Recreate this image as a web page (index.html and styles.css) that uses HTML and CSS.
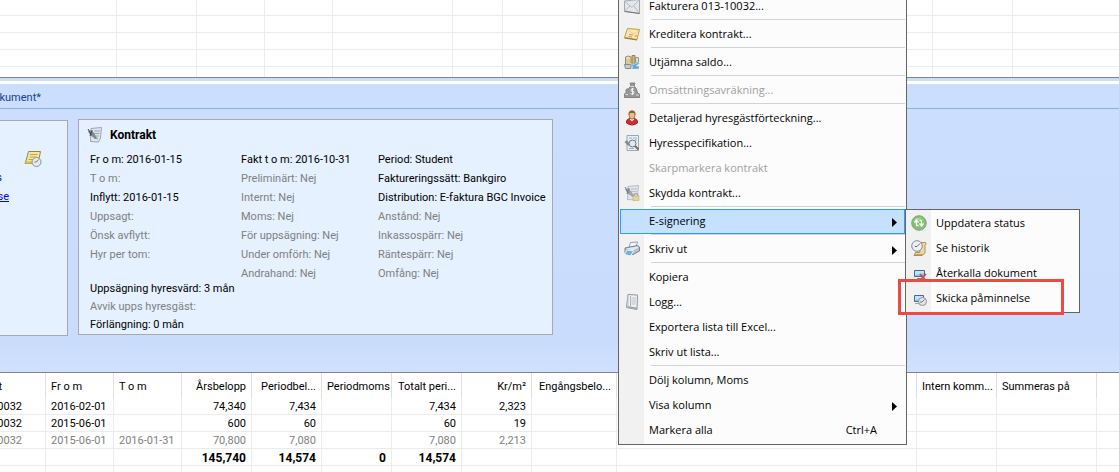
FILE: index.html
```html
<!DOCTYPE html>
<html lang="sv">
<head>
<meta charset="utf-8">
<title>Kontrakt</title>
<link rel="stylesheet" href="styles.css">
</head>
<body>
<main class="app">
  <section class="upper">
    <table class="grid grid-upper">
      <colgroup><col class="w117"><col class="w80"><col class="w68"><col class="w68"><col class="w120"><col class="w50"><col class="w80"><col class="w350"><col class="w80"><col></colgroup>
      <tbody>
        <tr class="cut"><td></td><td></td><td></td><td></td><td></td><td></td><td></td><td></td><td></td><td></td></tr>
        <tr><td></td><td></td><td></td><td></td><td></td><td></td><td></td><td></td><td></td><td></td></tr>
        <tr><td></td><td></td><td></td><td></td><td></td><td></td><td></td><td></td><td></td><td></td></tr>
        <tr><td></td><td></td><td></td><td></td><td></td><td></td><td></td><td></td><td></td><td></td></tr>
        <tr class="tail"><td></td><td></td><td></td><td></td><td></td><td></td><td></td><td></td><td></td><td></td></tr>
      </tbody>
    </table>
  </section>
  <div class="splitter"></div>
  <nav class="tabs"><a class="tab" href="#dokument">okument*</a></nav>
  <section class="details">
    <article class="card card-side">
      <svg class="note" width="18" height="18" viewBox="0 0 18 18"><path d="M4.500 1.500H16.500L14 13.500H1L2.500 9Z" fill="#f6e79a" stroke="#8f8658"/><path d="M6 4.500H13.500M5.500 7H12.500M4.500 9.500H10" stroke="#b9a755"/><path d="M1 13.500L2 11H9V13.500Z" fill="#e3c64e"/><circle cx="12.500" cy="12" r="4.500" fill="#e8ebee" stroke="#8b9096"/><path d="M12.500 12L14.500 9.500M12.500 12H10.500" stroke="#777" fill="none"/></svg>
      <a class="side-link side-link-first" href="#s">s</a>
      <a class="side-link" href="#se">se</a>
    </article>
    <article class="card card-contract">
      <h2 class="card-title">
        <svg width="16" height="16" viewBox="0 0 16 16"><path d="M4 1.500L14.500 .5L13.500 11L11.500 15L3.500 14.500Z" fill="#dfe7ee" stroke="#9aa5af"/><path d="M7 4H13M7 6.500H12.500M8 9H12M7 11.500H11" stroke="#91a3b5"/><path d="M1 4L5 3L10 11L8.500 12L3 8Z" fill="#85898d"/><path d="M1 2L4.500 8M5 3.500L3 9" stroke="#44484c"/></svg>
        Kontrakt
      </h2>
      <div class="facts">
        <div class="fact-col">
          <p>Fr o m: 2016-01-15</p>
          <p class="dim">T o m:</p>
          <p>Inflytt: 2016-01-15</p>
          <p class="dim">Uppsagt:</p>
          <p class="dim">Önsk avflytt:</p>
          <p class="dim">Hyr per tom:</p>
          <div class="terms">
            <p>Uppsägning hyresvärd: 3 mån</p>
            <p class="dim">Avvik upps hyresgäst:</p>
            <p>Förlängning: 0 mån</p>
          </div>
        </div>
        <div class="fact-col">
          <p>Fakt t o m: 2016-10-31</p>
          <p class="dim">Preliminärt: Nej</p>
          <p class="dim">Internt: Nej</p>
          <p class="dim">Moms: Nej</p>
          <p class="dim">För uppsägning: Nej</p>
          <p class="dim">Under omförh: Nej</p>
          <p class="dim">Andrahand: Nej</p>
        </div>
        <div class="fact-col">
          <p>Period: Student</p>
          <p>Faktureringssätt: Bankgiro</p>
          <p>Distribution: E-faktura BGC Invoice</p>
          <p class="dim">Anstånd: Nej</p>
          <p class="dim">Inkassospärr: Nej</p>
          <p class="dim">Räntespärr: Nej</p>
          <p class="dim">Omfång: Nej</p>
        </div>
      </div>
    </article>
  </section>
  <section class="lower">
    <table class="grid grid-lower">
      <colgroup><col class="w46"><col class="w68"><col class="w68"><col class="w70"><col class="w70"><col class="w70"><col class="w70"><col class="w70"><col class="w85"><col class="w300"><col class="w80"><col class="w100"><col></colgroup>
      <thead>
        <tr><th class="ref ref-head"><span>t</span></th><th>Fr o m</th><th>T o m</th><th class="num">Årsbelopp</th><th class="num">Periodbel...</th><th class="num">Periodmoms</th><th class="num">Totalt peri...</th><th class="num">Kr/m²</th><th class="num">Engångsbelo...</th><th></th><th>Intern komm...</th><th>Summeras på</th><th></th></tr>
      </thead>
      <tbody>
        <tr><td class="ref"><span>0032</span></td><td>2016-02-01</td><td></td><td class="num">74,340</td><td class="num">7,434</td><td></td><td class="num">7,434</td><td class="num">2,323</td><td></td><td></td><td></td><td></td><td></td></tr>
        <tr><td class="ref"><span>0032</span></td><td>2015-06-01</td><td></td><td class="num">600</td><td class="num">60</td><td></td><td class="num">60</td><td class="num">19</td><td></td><td></td><td></td><td></td><td></td></tr>
        <tr class="dim"><td class="ref"><span>0032</span></td><td>2015-06-01</td><td>2016-01-31</td><td class="num">70,800</td><td class="num">7,080</td><td></td><td class="num">7,080</td><td class="num">2,213</td><td></td><td></td><td></td><td></td><td></td></tr>
        <tr class="sum"><td></td><td></td><td></td><td class="num">145,740</td><td class="num">14,574</td><td class="num">0</td><td class="num">14,574</td><td></td><td></td><td></td><td></td><td></td><td></td></tr>
        <tr><td></td><td></td><td></td><td></td><td></td><td></td><td></td><td></td><td></td><td></td><td></td><td></td><td></td></tr>
      </tbody>
    </table>
  </section>
</main>

<ul class="menu menu-main">
  <li><button class="item"><svg class="ico" viewBox="0 0 16 16"><path d="M.5 3L15.500 1.500V15.500L.5 13Z" fill="#e3e6ea" stroke="#a4a8ad"/><path d="M.5 3L8 9.500L15.500 1.500M.5 13L6 8M15.500 15.500L10 8" fill="none" stroke="#b4b9be"/><path d="M.5 13.500L15.500 15.500" stroke="#777"/></svg>Fakturera 013-10032...</button></li>
  <li class="sep"></li>
  <li><button class="item"><svg class="ico" viewBox="0 0 16 16"><path d="M3.500 2.500L15.500 3.500L13 13.500L.5 11.500Z" fill="#f8e7ae" stroke="#c39a4c"/><path d="M.5 12L13 14" stroke="#9b7430"/><path d="M5 5L10 8L14 5" fill="none" stroke="#e9cf8c"/><path d="M5 8.500L9 9M4.500 10.500L8 11" stroke="#d88b70"/><path d="M11 9H13V11H10.500Z" fill="#e9b94e"/></svg>Kreditera kontrakt...</button></li>
  <li class="sep"></li>
  <li><button class="item"><svg class="ico" viewBox="0 0 16 16"><path d="M1.500 3Q4 1 7 3V12H1.500Z" fill="#ece0b0" stroke="#8f8a70"/><path d="M8 1.500H11V12H8Z" fill="#d2ba6a" stroke="#938452"/><path d="M11.500 3.500H14.500V9H11.500Z" fill="#d8dde0" stroke="#8e969c"/><path d="M3 5V11M5 5V11" stroke="#c5b36c"/><path d="M.5 10.500H7V14.500H1.500Z" fill="#c7ccd0" stroke="#858b90"/><path d="M6 9L9 11L14 8.500L15.500 9.500L12 12H15V15H7L9 13Z" fill="#5fa5d9" stroke="#d9edf8" stroke-width=".5"/></svg>Utjämna saldo...</button></li>
  <li class="sep"></li>
  <li><button class="item" disabled><svg class="ico" viewBox="0 0 16 16"><path d="M6 1H11L10 4Q13 6 13.500 11L15.500 12V15.500H.5V12L2 10.500V7.500L4.500 6.500L7 4Z" fill="#969696" stroke="#858585"/><path d="M6.500 4.500H10M1.500 12.500H4M12 13H15" stroke="#ddd"/><path d="M10 7Q7 6 7 8T9 9.500T9.500 12Q8 13 6.500 11.500M8.500 6V13" fill="none" stroke="#f0f0f0"/></svg>Omsättningsavräkning...</button></li>
  <li class="sep"></li>
  <li><button class="item"><svg class="ico" viewBox="0 0 16 16"><path d="M2.500 13Q2 8.500 7 8.500H9Q14 8.500 13.500 13Q8 17 2.500 13Z" fill="#cf2f30" stroke="#9e2526"/><path d="M5.500 9L8 11.500L10.500 9Z" fill="#f2e5da"/><ellipse cx="8" cy="5" rx="3" ry="4" fill="#e9bb8e" stroke="#a87a4e"/><path d="M4.500 5Q4 .5 8 .5T11.500 5L10 3H6Z" fill="#91602f"/></svg>Detaljerad hyresgästförteckning...</button></li>
  <li><button class="item"><svg class="ico" viewBox="0 0 16 16"><path d="M3 .5H14.500V15.500H3Z" fill="#e9eff5" stroke="#96a8ba"/><path d="M5 3H8M9 3H13M11 5H13M5 13.500H10" stroke="#9ab0c6"/><path d="M.5 7L3 5L6 9L4 11Z" fill="#8b8f93"/><circle cx="8.500" cy="8.500" r="3.500" fill="#dfeaf3" stroke="#71787f"/><path d="M11 11L14.500 14.500" stroke="#8b6548" stroke-width="2"/></svg>Hyresspecifikation...</button></li>
  <li><button class="item" disabled><span class="ico"></span>Skarpmarkera kontrakt</button></li>
  <li><button class="item"><svg class="ico" viewBox="0 0 16 16"><path d="M4 1.500L14.500 .5L13.500 11L11.500 15L3.500 14.500Z" fill="#dfe5ea" stroke="#b4bcc4"/><path d="M7 4H13M7 6.500H12.500M8 9H12" stroke="#b5c1cd"/><path d="M1 4L5 3L10 11L8.500 12L3 8Z" fill="#a0a5a9"/><path d="M1 2L4.500 8M5 3.500L3 9" stroke="#777c80"/><path d="M10 11V9.500Q12 7.500 14 9.500V11" fill="none" stroke="#999"/><path d="M9 11H15V15.500H9Z" fill="#e5d695" stroke="#b9a55d" stroke-width=".5"/></svg>Skydda kontrakt...</button></li>
  <li class="sep"></li>
  <li><button class="item active" aria-haspopup="menu" aria-expanded="true"><span class="ico"></span>E-signering<svg class="arrow" viewBox="0 0 5 9"><path d="M0 0L5 4.500L0 9Z"/></svg></button></li>
  <li class="sep"></li>
  <li><button class="item" aria-haspopup="menu"><svg class="ico" viewBox="0 0 16 16"><path d="M6.500 1.500L13.500 1L12 6L5 6.500Z" fill="#f4f8fb" stroke="#8fa2b3"/><path d="M1 7L13.500 4.500L15.500 6V10L9 13.500L1 12Z" fill="#b6c3cf" stroke="#76828e"/><path d="M2 7.500L13.500 5.500L14.500 6.500L9 9.500Z" fill="#e2e9ef"/><path d="M3 9L9.500 10L6.500 15L.5 13.500Z" fill="#72aee0" stroke="#e9f2f8"/></svg>Skriv ut<svg class="arrow" viewBox="0 0 5 9"><path d="M0 0L5 4.500L0 9Z"/></svg></button></li>
  <li class="sep"></li>
  <li><button class="item"><span class="ico"></span>Kopiera</button></li>
  <li><button class="item"><svg class="ico" viewBox="0 0 16 16"><path d="M4 .5L13.500 1L13 15.500L2.500 13.500Z" fill="#edf2f6" stroke="#8e969e"/><path d="M2.500 13.500L13 15.500V13.500L4 12Z" fill="#a2aab1"/><path d="M6.500 2V12" stroke="#c28b8b" stroke-width=".7"/><path d="M7.500 4H12M7.500 6H12M7.500 8H12M7.500 10H11.500M4 2.500V12" stroke="#b7c5d3"/></svg>Logg...</button></li>
  <li><button class="item"><span class="ico"></span>Exportera lista till Excel...</button></li>
  <li><button class="item"><span class="ico"></span>Skriv ut lista...</button></li>
  <li class="sep"></li>
  <li><button class="item"><span class="ico"></span>Dölj kolumn, Moms</button></li>
  <li><button class="item" aria-haspopup="menu"><span class="ico"></span>Visa kolumn<svg class="arrow" viewBox="0 0 5 9"><path d="M0 0L5 4.500L0 9Z"/></svg></button></li>
  <li><button class="item"><span class="ico"></span>Markera alla<kbd class="keys">Ctrl+A</kbd></button></li>
</ul>

<ul class="menu menu-sub">
  <li><button class="item"><svg class="ico" viewBox="0 0 16 16"><circle cx="8" cy="8" r="7.300" fill="#7cc46f" stroke="#8f9c8c"/><path d="M3 6Q5 2 11 3Q7 4 4 9Z" fill="#a9dc9f"/><path d="M7.500 10.500H5.500V6M3.500 7.500L5.500 5L7.500 7.500M8.500 5.500H10.500V10M8.500 8.500L10.500 11L12.500 8.500" fill="none" stroke="#fff" stroke-width="1.300"/></svg>Uppdatera status</button></li>
  <li><button class="item"><svg class="ico" viewBox="0 0 16 16"><path d="M8 2.500H14.500Q16 4 14 5.500V13L11 15.500H3L4.500 12.500H9Z" fill="#f0d9a8" stroke="#b58f52"/><path d="M3.500 14.500H12" stroke="#cf9d50"/><circle cx="6" cy="6" r="5.300" fill="#eef1f4" stroke="#858c94"/><path d="M6 6.500L9 3.500M6 6.500H4" stroke="#666" fill="none"/></svg>Se historik</button></li>
  <li><button class="item"><svg class="ico" viewBox="0 0 16 16"><path d="M3.500 5.500H13.500V11.500H3.500Z" fill="#8fc3ec" stroke="#49698a"/><path d="M4 6H13V8L4 10Z" fill="#c4e1f7"/><path d="M6 13.500H10" stroke="#7b8790"/><path d="M9 9L15 15.500M15 9L9 15.500" stroke="#cf4a44" stroke-width="1.700"/></svg>Återkalla dokument</button></li>
  <li><button class="item"><svg class="ico" viewBox="0 0 16 16"><path d="M3.500 5.500H12.500V11.500H3.500Z" fill="#8fc3ec" stroke="#49698a"/><path d="M4 6H12V8L4 10Z" fill="#c4e1f7"/><path d="M4 13.500H8" stroke="#a1a9b0"/><circle cx="11.500" cy="11.500" r="4" fill="#e2e5e8" stroke="#8c9299"/><path d="M11 12L13.500 9.500M11 12H9" stroke="#777" fill="none"/></svg>Skicka påminnelse</button></li>
</ul>
<div class="highlight"></div>
</body>
</html>
```
FILE: styles.css
```css
* { box-sizing: border-box; }

body {
  margin: 0;
  height: 100vh;
  overflow: hidden;
  position: relative;
  background: #fff;
  color: #000;
  font: 11px/17px Roboto, "Liberation Sans", Arial, sans-serif;
}

p, h2, ul { margin: 0; padding: 0; }

.dim { color: #808080; }

/* Data grids */
.grid {
  width: 100%;
  table-layout: fixed;
  border-collapse: separate;
  border-spacing: 0;
}
.grid td, .grid th {
  height: 17px;
  padding: 0 5px;
  border-right: 1px solid #ececec;
  border-bottom: 1px solid #ececec;
  font-weight: normal;
  line-height: 14px;
  text-align: left;
  vertical-align: bottom;
  white-space: nowrap;
}
.grid td:last-child, .grid th:last-child { border-right: 0; }
.grid th { height: 25px; line-height: 23px; border-bottom: 0; border-color: #e0e0e0; }
.grid .num { text-align: right; }
.grid .sum td { font-size: 12px; font-weight: bold; }
.grid .cut td { height: 16px; }
.grid .tail td { height: 10px; border-bottom: 0; }
.grid .ref { padding: 0; }
.ref span { display: flex; justify-content: flex-end; width: 22px; }
.ref-head span { width: 2px; }
.w46 { width: 46px; }
.w50 { width: 50px; }
.w68 { width: 68px; }
.w70 { width: 70px; }
.w80 { width: 80px; }
.w85 { width: 85px; }
.w100 { width: 100px; }
.w117 { width: 117px; }
.w120 { width: 120px; }
.w300 { width: 300px; }
.w350 { width: 350px; }

/* Panels */
.upper { border-bottom: 1px solid #7f838a; }
.splitter { height: 6px; background: #fff; border-top: 3px solid #cbdefd; }
.tabs { height: 25px; background: #cbdefd; border-bottom: 1px solid #8aafe2; }
.tab {
  display: flex;
  justify-content: flex-end;
  width: 41px;
  color: #15428b;
  line-height: 28px;
  text-decoration: none;
}
.details {
  display: flex;
  align-items: flex-start;
  gap: 10px;
  height: 264px;
  padding-top: 10px;
  background: linear-gradient(#cbdefd, #c9dcfd 88%, #d0e1fe);
  border-bottom: 1px solid #7f838a;
}
.card { height: 216px; background: #e5f1fe; border: 1px solid #a9a9ad; }
.card-side {
  display: flex;
  flex-direction: column;
  width: 68px;
  margin-top: 1px;
  padding-top: 29px;
  border-left: 0;
}
.note { margin-left: 24px; }
.side-link { display: flex; justify-content: flex-end; width: 9px; color: #00f; line-height: 19px; }
.side-link-first { width: 2px; text-decoration: none; }
.card-contract { width: 475px; padding-left: 8px; }
.card-title {
  display: flex;
  align-items: center;
  gap: 7px;
  height: 30px;
  font-size: 12px;
}
.facts { display: grid; grid-template-columns: 151px 137px 1fr; padding-left: 3px; white-space: nowrap; }
.facts p { line-height: 19px; }
.terms { padding-top: 16px; }
.facts .terms p { line-height: 18px; }

/* Context menus */
.menu {
  position: absolute;
  list-style: none;
  padding: 1px;
  border: 1px solid #646464;
  background: linear-gradient(90deg, #f1f1f1 25px, #fcfcfc 25px);
}
.menu-main { left: 618px; top: -8px; width: 289px; }
.menu-sub { left: 905px; top: 209px; width: 175px; }
.item {
  display: flex;
  align-items: center;
  width: 100%;
  height: 25px;
  padding: 0 8px 2px 4px;
  border: 0;
  background: none;
  color: #000;
  font: 11px/16px "Open Sans", "Segoe UI", sans-serif;
  text-align: left;
  white-space: nowrap;
}
.item:disabled { color: #a0a0a0; }
.item.active { background: #c4e1ff; outline: 1px solid #3399ff; outline-offset: -1px; }
.ico { flex: none; width: 16px; height: 16px; margin-right: 9px; }
.arrow { width: 5px; height: 9px; margin-left: auto; margin-top: 4px; }
.keys { margin-left: auto; margin-right: 20px; font: inherit; }
.sep { height: 3px; margin-left: 31px; border-top: 1px solid #d0d3d3; }

.highlight {
  position: absolute;
  left: 898px;
  top: 279px;
  width: 166px;
  height: 36px;
  border: 3px solid #ea4b43;
}
```
